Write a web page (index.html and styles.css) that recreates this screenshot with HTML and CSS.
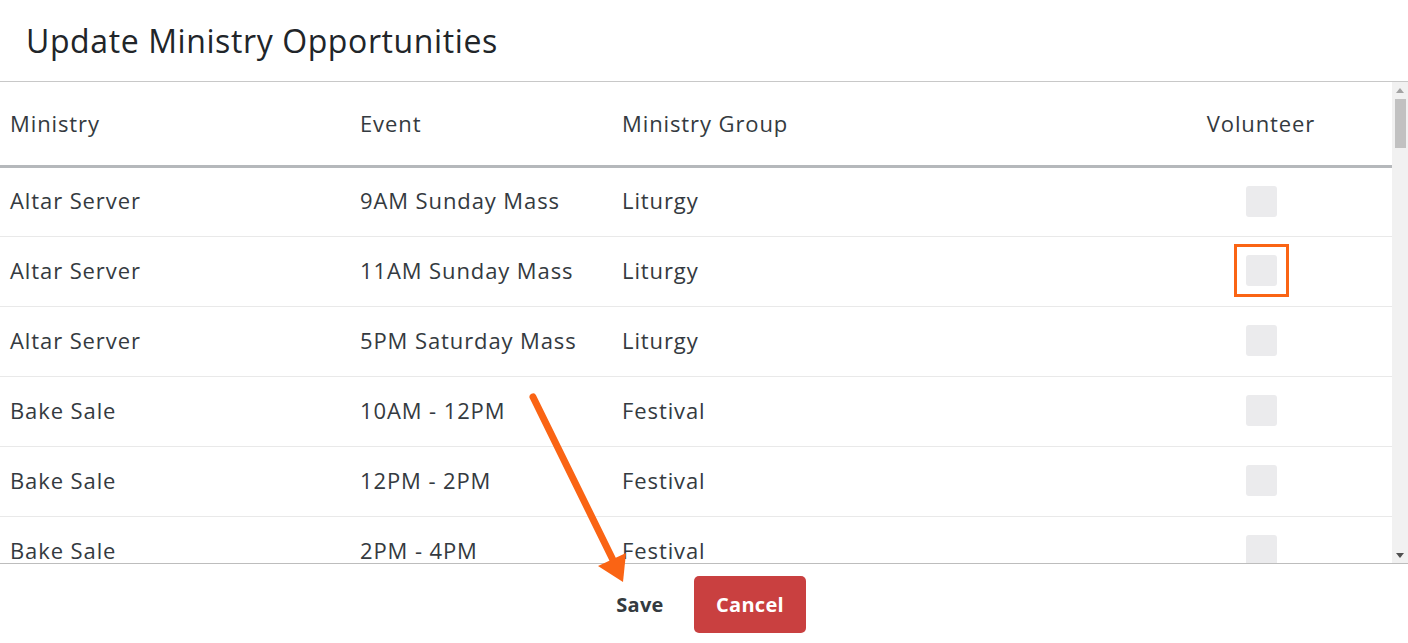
FILE: index.html
```html
<!DOCTYPE html>
<html>
<head>
<meta charset="utf-8">
<link rel="stylesheet" href="styles.css">
</head>
<body>
<div class="modal">
  <div class="modal-header"><h1 class="title">Update Ministry Opportunities</h1></div>
  <div class="modal-body">
    <div class="table-wrap">
      <table class="grid">
        <thead>
          <tr><th class="c-min">Ministry</th><th class="c-ev">Event</th><th class="c-grp">Ministry Group</th><th class="c-vol">Volunteer</th></tr>
        </thead>
        <tbody>
          <tr><td>Altar Server</td><td>9AM Sunday Mass</td><td>Liturgy</td><td class="c-vol"><span class="cb"></span></td></tr>
          <tr><td>Altar Server</td><td>11AM Sunday Mass</td><td>Liturgy</td><td class="c-vol"><span class="cb hl"></span></td></tr>
          <tr><td>Altar Server</td><td>5PM Saturday Mass</td><td>Liturgy</td><td class="c-vol"><span class="cb"></span></td></tr>
          <tr><td>Bake Sale</td><td>10AM - 12PM</td><td>Festival</td><td class="c-vol"><span class="cb"></span></td></tr>
          <tr><td>Bake Sale</td><td>12PM - 2PM</td><td>Festival</td><td class="c-vol"><span class="cb"></span></td></tr>
          <tr><td>Bake Sale</td><td>2PM - 4PM</td><td>Festival</td><td class="c-vol"><span class="cb"></span></td></tr>
          <tr><td>Bake Sale</td><td>4PM - 6PM</td><td>Festival</td><td class="c-vol"><span class="cb"></span></td></tr>
        </tbody>
      </table>
    </div>
    <div class="scrollbar">
      <div class="sb-btn"><svg width="8" height="5" viewBox="0 0 8 5"><polygon points="0,5 8,5 4,0" fill="#a3a3a3"/></svg></div>
      <div class="sb-track"><div class="sb-thumb"></div></div>
      <div class="sb-btn"><svg width="8" height="5" viewBox="0 0 8 5"><polygon points="0,0 8,0 4,5" fill="#505050"/></svg></div>
    </div>
  </div>
  <div class="modal-footer">
    <button class="btn btn-save">Save</button>
    <button class="btn btn-cancel">Cancel</button>
  </div>
  <svg class="arrow" width="1408" height="643" viewBox="0 0 1408 643">
    <line x1="533" y1="397" x2="613" y2="560" stroke="#fa6414" stroke-width="7" stroke-linecap="round"/>
    <polygon points="623,582 598,566 626,553" fill="#fa6414"/>
  </svg>
</div>
</body>
</html>
```
FILE: styles.css
```css
*, *::before, *::after { box-sizing: border-box; }
html, body { margin: 0; padding: 0; background: #fff; }
body { font-family: "Open Sans", Lato, sans-serif; color: #343a40; width: 1408px; height: 643px; overflow: hidden; }
.modal { position: relative; display: flex; flex-direction: column; height: 643px; }
.modal-header { height: 82px; flex: none; border-bottom: 1px solid #c8c8c8; display: flex; align-items: center; padding: 0 26px; }
.title { margin: 0; font-weight: 400; font-size: 32px; letter-spacing: 0.6px; color: #212529; }
.modal-body { height: 482px; flex: none; display: flex; border-bottom: 1px solid #bdbdbd; }
.table-wrap { flex: 1; overflow: hidden; }
.scrollbar { width: 16px; flex: none; background: #f1f1f1; display: flex; flex-direction: column; }
.sb-btn { height: 16px; flex: none; display: flex; align-items: center; justify-content: center; }
.sb-btn svg { display: block; }
.sb-track { flex: 1; }
.sb-thumb { height: 49px; margin: 1px 2px 0 3px; background: #c1c1c1; }
.grid { width: 100%; border-collapse: collapse; font-size: 22px; letter-spacing: 0.9px; }
.grid th { font-weight: 400; text-align: left; height: 84px; border-bottom: 3px solid #b5b8bb; padding: 0 10px 1px; }
.grid td { height: 70px; border-bottom: 1px solid #e9e9e9; padding: 0 10px 3px; }
.c-min { width: 350px; }
.c-ev { width: 262px; }
.c-grp { width: 520px; }
.grid .c-vol { text-align: center; padding-left: 9px; padding-right: 11px; }
.cb { display: inline-block; width: 31px; height: 31px; background: #ebebed; border-radius: 3px; vertical-align: middle; position: relative; }
.cb.hl::after { content: ""; position: absolute; left: -12px; top: -11px; width: 55px; height: 53px; border: 3px solid #fa6414; }
.modal-footer { flex: 1; display: flex; justify-content: center; align-items: center; gap: 16px; padding-top: 2px; }
.btn { font-family: inherit; font-size: 20px; font-weight: 700; border: 0; border-radius: 5px; height: 57px; cursor: pointer; padding: 0; letter-spacing: 0.3px; }
.btn-save { background: transparent; color: #343a40; width: 76px; }
.btn-cancel { background: #c94040; color: #fff; width: 112px; }
.arrow { position: absolute; left: 0; top: 0; pointer-events: none; }
```
